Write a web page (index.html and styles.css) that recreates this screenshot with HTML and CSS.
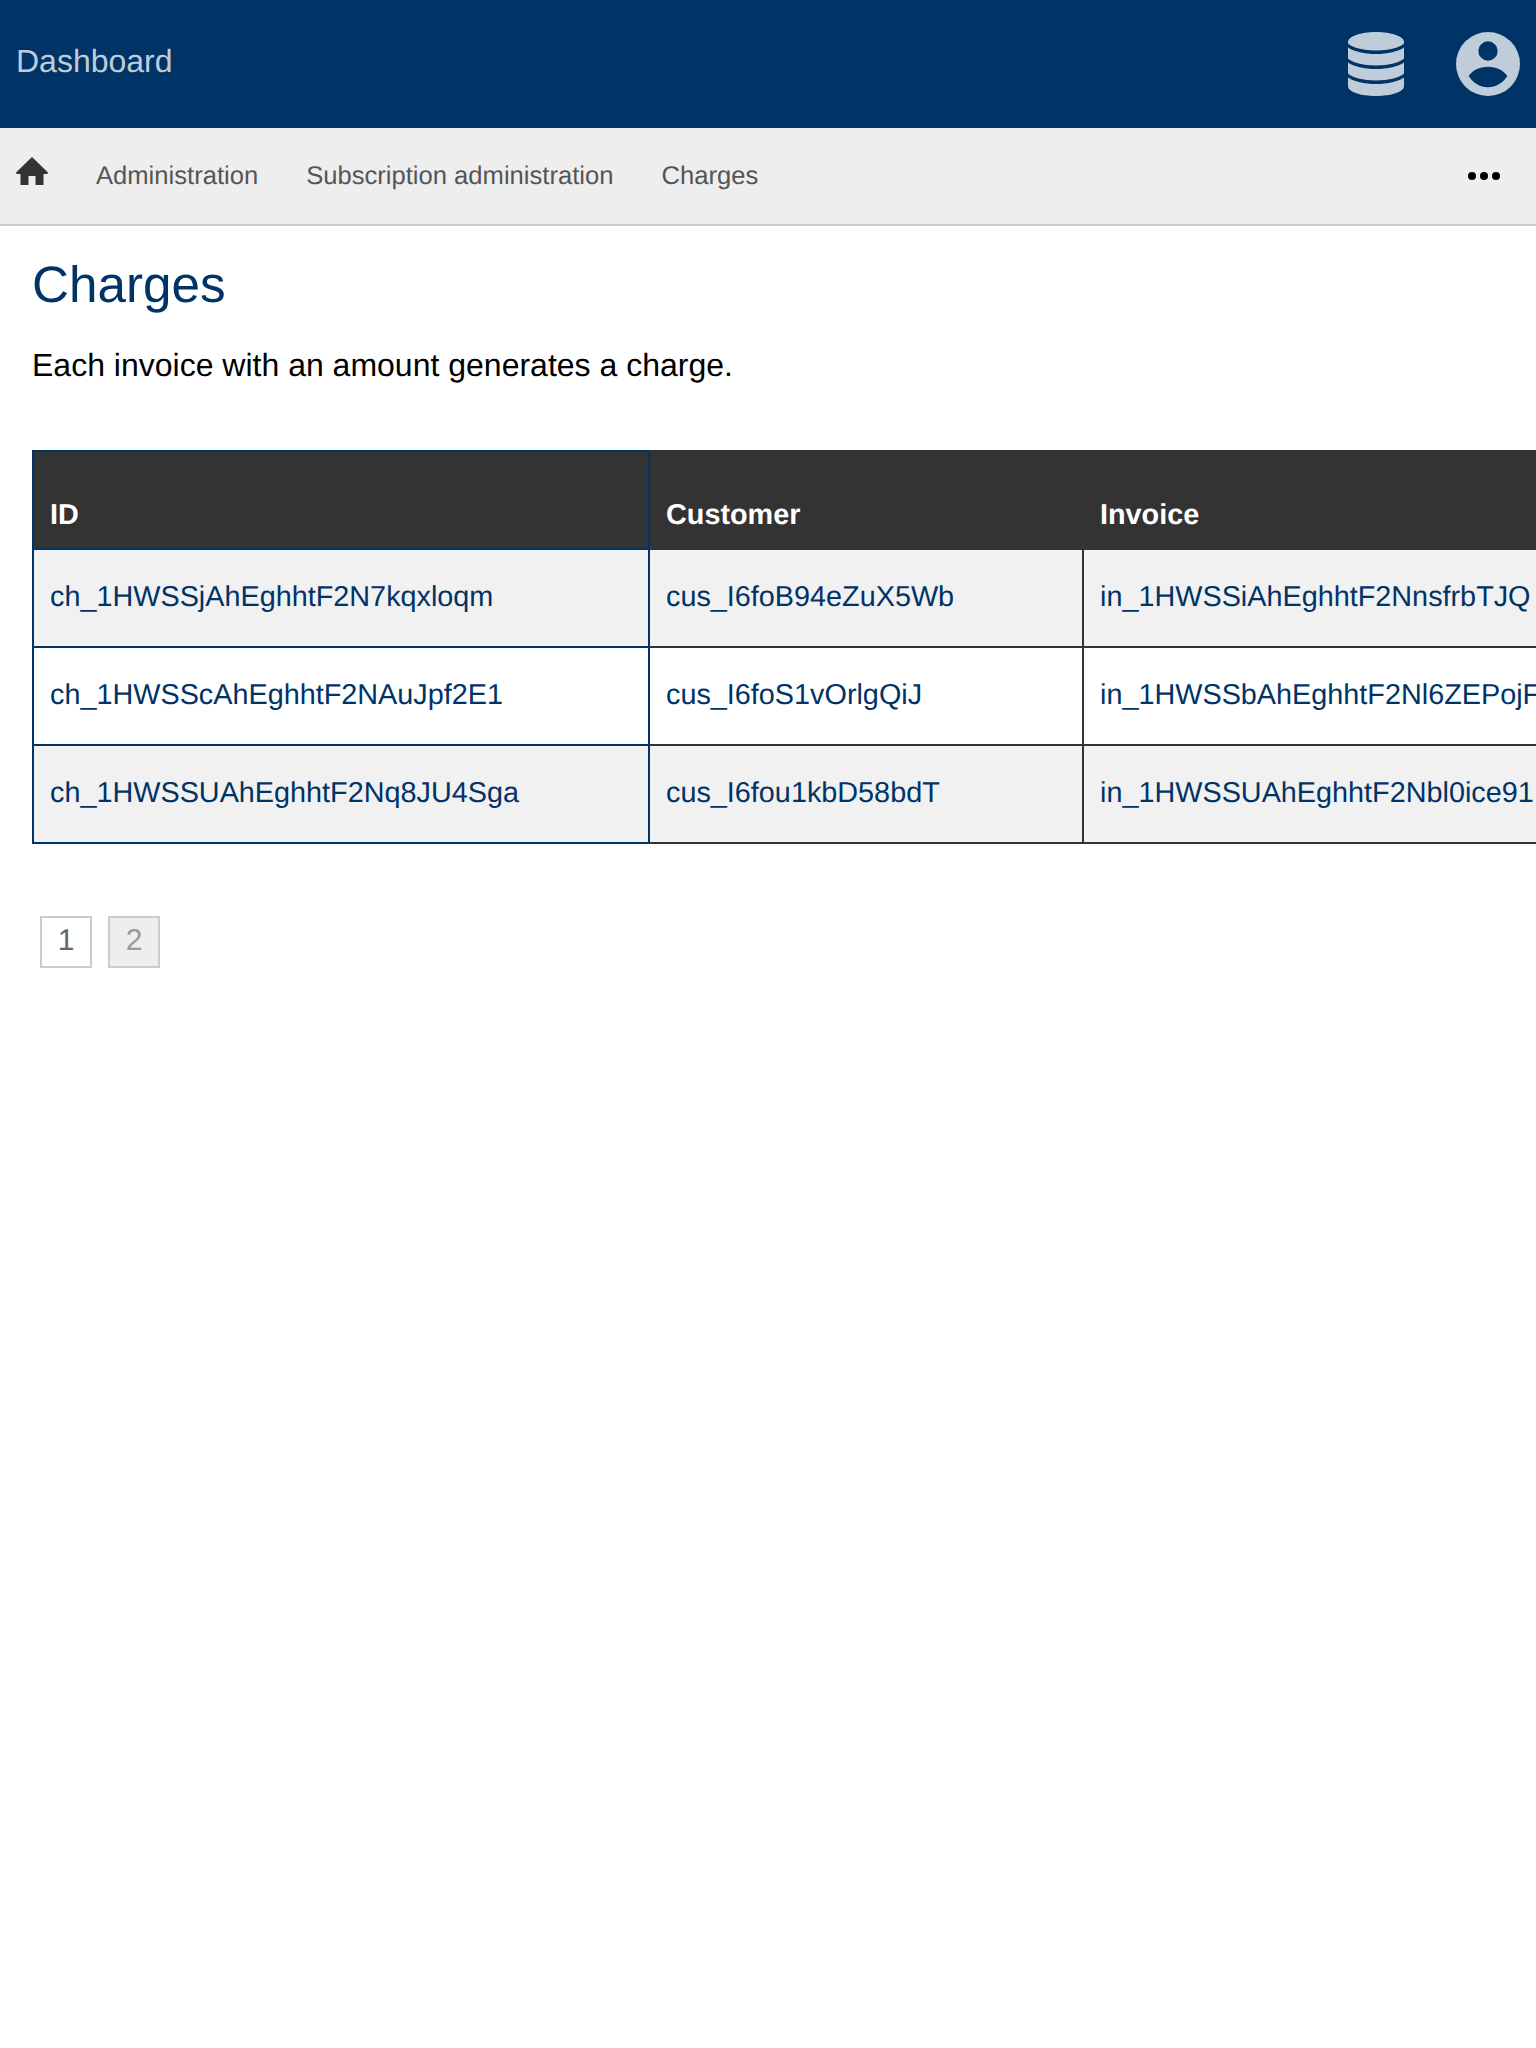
FILE: index.html
```html
<!DOCTYPE html>
<html lang="en">

<head>
    <meta charset="UTF-8">
    <meta name="viewport" content="width=device-width, initial-scale=1.0">
    <title>Charges</title>
    <link rel="stylesheet" href="styles.css">
</head>

<body>
    <header class="topbar">
        <a class="brand" href="#">Dashboard</a>
        <div class="topbar-icons">
            <svg class="icon-db" viewBox="0 0 56 64" width="56" height="64">
                <path d="M28 0C12.500 0 0 4.500 0 10V11.500C4 15.500 15 18.500 28 18.500S52 15.500 56 11.500V10C56 4.500 43.500 0 28 0z" />
                <path d="M0 15.500C6 19.500 16 22 28 22S50 19.500 56 15.500V26.500C52 30.500 41 33.500 28 33.500S4 30.500 0 26.500z" />
                <path d="M0 30.500C6 34.500 16 37 28 37S50 34.500 56 30.500V41.500C52 45.500 41 48.500 28 48.500S4 45.500 0 41.500z" />
                <path d="M0 45.500C6 49.500 16 52 28 52S50 49.500 56 45.500V54C56 60 43.500 64 28 64S0 60 0 54z" />
            </svg>
            <svg class="icon-user" viewBox="0 0 64 64" width="64" height="64">
                <path fill-rule="evenodd" d="M32 0a32 32 0 1 0 0 64a32 32 0 0 0 0-64zM32 9.300a9.700 9.700 0 1 1 0 19.400a9.700 9.700 0 0 1 0-19.400zM32 34.700c8.500 0 15.500 3.500 19.300 9.300C47.500 50.500 40 55.300 32 55.300S16.500 50.500 12.700 44C16.500 38.200 23.500 34.700 32 34.700z" />
            </svg>
        </div>
    </header>

    <nav class="breadcrumb">
        <a class="home" href="#">
            <svg viewBox="0 0 32 28" width="32" height="28">
                <path d="M16 0L32 15.500C32 16.500 31 17 30 17H27.500V28H19.500V19H12.500V28H4.500V17H2C1 17 0 16.500 0 15.500z" />
            </svg>
        </a>
        <a class="crumb" href="#">Administration</a>
        <a class="crumb" href="#">Subscription administration</a>
        <a class="crumb" href="#">Charges</a>
        <span class="more"><i></i><i></i><i></i></span>
    </nav>

    <main class="content">
        <h1>Charges</h1>
        <p class="intro">Each invoice with an amount generates a charge.</p>

        <table class="charges">
            <thead>
                <tr>
                    <th>ID</th>
                    <th>Customer</th>
                    <th>Invoice</th>
                </tr>
            </thead>
            <tbody>
                <tr>
                    <td><a href="#">ch_1HWSSjAhEghhtF2N7kqxloqm</a></td>
                    <td><a href="#">cus_I6foB94eZuX5Wb</a></td>
                    <td><a href="#">in_1HWSSiAhEghhtF2NnsfrbTJQ</a></td>
                </tr>
                <tr>
                    <td><a href="#">ch_1HWSScAhEghhtF2NAuJpf2E1</a></td>
                    <td><a href="#">cus_I6foS1vOrlgQiJ</a></td>
                    <td><a href="#">in_1HWSSbAhEghhtF2Nl6ZEPojF</a></td>
                </tr>
                <tr>
                    <td><a href="#">ch_1HWSSUAhEghhtF2Nq8JU4Sga</a></td>
                    <td><a href="#">cus_I6fou1kbD58bdT</a></td>
                    <td><a href="#">in_1HWSSUAhEghhtF2Nbl0ice91</a></td>
                </tr>
            </tbody>
        </table>

        <div class="pager">
            <a class="page current" href="#">1</a>
            <a class="page disabled" href="#">2</a>
        </div>
    </main>
</body>

</html>
```

FILE: styles.css
```css
html,
body {
    overflow-x: hidden;
}

body {
    font-family: "Liberation Sans", Arial, sans-serif;
    margin: 0;
    padding: 0;
    background-color: #fff;
    color: #000;
    text-rendering: geometricPrecision;
}

a {
    text-decoration: none;
}

.topbar {
    display: flex;
    justify-content: space-between;
    align-items: center;
    height: 128px;
    padding: 0 16px;
    background-color: #003366;
    box-sizing: border-box;
}

.brand {
    font-size: 32px;
    margin-bottom: 5px;
    color: #bfccda;
}

.topbar-icons {
    display: flex;
    align-items: center;
    gap: 52px;
}

.topbar-icons svg {
    display: block;
    fill: #bfccda;
}

.breadcrumb {
    display: flex;
    align-items: center;
    height: 96px;
    padding: 0 16px;
    background-color: #eee;
    border-bottom: 2px solid #ccc;
}

.breadcrumb a {
    margin-right: 48px;
}

.crumb {
    font-size: 25.6px;
    color: #555;
}

.breadcrumb .home {
    display: block;
    margin-bottom: 11px;
    line-height: 0;
}

.home svg {
    fill: #333;
}

.more {
    display: flex;
    gap: 4px;
    margin-left: auto;
    margin-right: 20px;
}

.more i {
    display: block;
    width: 8px;
    height: 8px;
    border-radius: 50%;
    background-color: #000;
}

.content {
    padding: 0 32px;
}

h1 {
    margin: 30px 0 0;
    font-size: 51.2px;
    font-weight: normal;
    line-height: 58px;
    color: #003366;
}

.intro {
    margin: 32px 0 0;
    font-size: 32px;
    line-height: 38px;
}

.charges {
    margin-top: 66px;
    border-collapse: collapse;
    table-layout: fixed;
    width: 1800px;
    font-size: 28.8px;
}

.charges th,
.charges td {
    padding: 0 16px;
    text-align: left;
    border: 2px solid #333;
    white-space: nowrap;
}

.charges th {
    height: 98px;
    padding-bottom: 16px;
    vertical-align: bottom;
    box-sizing: border-box;
    background-color: #333;
    color: #fff;
}

.charges td {
    height: 98px;
    padding-bottom: 2px;
    box-sizing: border-box;
}

.charges th:first-child,
.charges td:first-child {
    width: 616px;
    border-color: #003366;
}

.charges th:nth-child(2) {
    width: 434px;
}

.charges tbody tr:nth-child(odd) {
    background-color: #f1f1f1;
}

.charges a {
    color: #003366;
}

.pager {
    display: flex;
    gap: 16px;
    margin: 72px 0 0 8px;
}

.page {
    display: block;
    width: 52px;
    height: 52px;
    line-height: 45px;
    text-align: center;
    font-size: 30px;
    border: 2px solid #ccc;
    box-sizing: border-box;
    color: #666;
}

.page.disabled {
    background-color: #eee;
    color: #999;
}
```
